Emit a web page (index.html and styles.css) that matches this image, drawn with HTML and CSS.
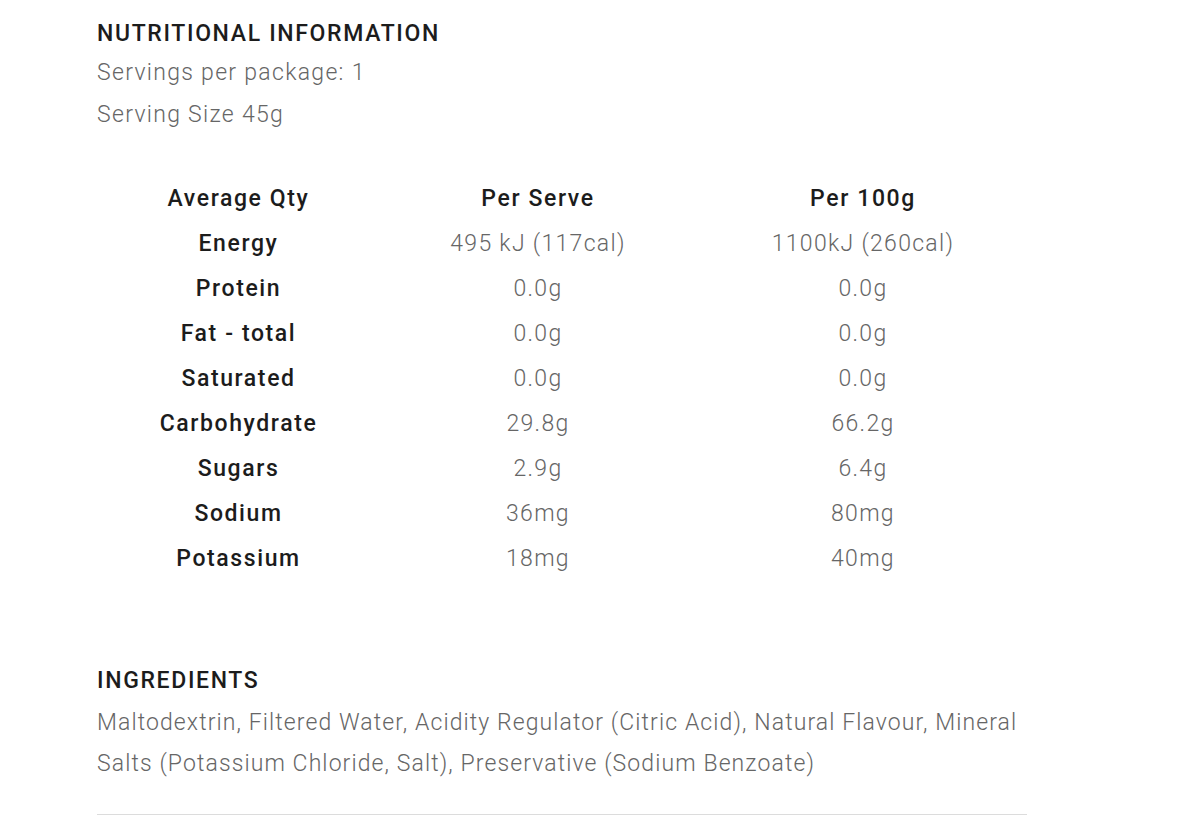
FILE: index.html
```html
<!DOCTYPE html>
<html lang="en">
<head>
<meta charset="utf-8">
<link rel="stylesheet" href="styles.css">
</head>
<body>
<div class="panel">
  <section class="nutrition">
    <h2 class="title">NUTRITIONAL INFORMATION</h2>
    <p class="meta">Servings per package: 1</p>
    <p class="meta">Serving Size 45g</p>
    <div class="table">
      <div class="row head"><span>Average Qty</span><span>Per Serve</span><span>Per 100g</span></div>
      <div class="row"><span class="label">Energy</span><span>495 kJ (117cal)</span><span>1100kJ (260cal)</span></div>
      <div class="row"><span class="label">Protein</span><span>0.0g</span><span>0.0g</span></div>
      <div class="row"><span class="label">Fat - total</span><span>0.0g</span><span>0.0g</span></div>
      <div class="row"><span class="label">Saturated</span><span>0.0g</span><span>0.0g</span></div>
      <div class="row"><span class="label">Carbohydrate</span><span>29.8g</span><span>66.2g</span></div>
      <div class="row"><span class="label">Sugars</span><span>2.9g</span><span>6.4g</span></div>
      <div class="row"><span class="label">Sodium</span><span>36mg</span><span>80mg</span></div>
      <div class="row"><span class="label">Potassium</span><span>18mg</span><span>40mg</span></div>
    </div>
  </section>
  <section class="ingredients">
    <h2 class="title">INGREDIENTS</h2>
    <p class="text">Maltodextrin, Filtered Water, Acidity Regulator (Citric Acid), Natural Flavour, Mineral Salts (Potassium Chloride, Salt), Preservative (Sodium Benzoate)</p>
  </section>
  <hr class="rule">
</div>
</body>
</html>
```
FILE: styles.css
```css
html, body {
  margin: 0;
  padding: 0;
  background: #fff;
}
body {
  font-family: Roboto, "Liberation Sans", sans-serif;
}
.panel {
  width: 930px;
  margin-left: 97px;
  padding-top: 16px;
}
.title {
  margin: 0;
  font-size: 23px;
  font-weight: 500;
  letter-spacing: 1.65px;
  color: #1c1c1c;
  line-height: 36px;
}
.meta {
  margin: 0;
  font-size: 23px;
  font-weight: 300;
  letter-spacing: 1.3px;
  color: #666;
  line-height: 42px;
}
.table {
  margin-top: 40px;
  display: flex;
  flex-direction: column;
}
.row {
  display: grid;
  grid-template-columns: 283px 316px 334px;
  height: 45px;
  align-items: center;
}
.row span {
  text-align: center;
  font-size: 23px;
  font-weight: 300;
  letter-spacing: 1.3px;
  color: #666;
}
.row.head span,
.row span.label {
  font-weight: 500;
  letter-spacing: 1.6px;
  color: #1c1c1c;
}
.ingredients {
  margin-top: 79px;
}
.ingredients .title {
  line-height: 42px;
}
.text {
  margin: 0;
  font-size: 23px;
  font-weight: 300;
  letter-spacing: 1.1px;
  color: #666;
  line-height: 41px;
  width: 930px;
}
.rule {
  margin: 30px 0 0;
  border: 0;
  border-top: 1px solid #dcdcdc;
  width: 930px;
}
```
